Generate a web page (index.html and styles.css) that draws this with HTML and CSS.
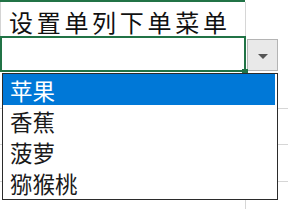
FILE: index.html
```html
<!DOCTYPE html>
<html lang="zh-CN">
<head>
    <meta charset="UTF-8">
    <title>设置单列下单菜单</title>
    <link rel="stylesheet" href="styles.css">
</head>
<body>
    <div class="sheet">
        <div class="top-edge"></div>

        <!-- title row -->
        <div class="row row-title">
            <div class="cell cell-a">设置单列下单菜单</div>
            <div class="cell cell-b"></div>
        </div>

        <!-- selected cell with dropdown button -->
        <div class="row row-select">
            <div class="cell-active"></div>
            <div class="drop-btn"><span class="arrow"></span></div>
        </div>
        <div class="fill-handle"></div>

        <div class="row row-plain"><div class="cell cell-a"></div><div class="cell cell-b"></div></div>
        <div class="row row-plain"><div class="cell cell-a"></div><div class="cell cell-b"></div></div>
        <div class="row row-plain"><div class="cell cell-a"></div><div class="cell cell-b"></div></div>
        <div class="row row-plain"><div class="cell cell-a"></div><div class="cell cell-b"></div></div>

        <!-- dropdown list -->
        <ul class="list">
            <li class="item selected">苹果</li>
            <li class="item">香蕉</li>
            <li class="item">菠萝</li>
            <li class="item">猕猴桃</li>
        </ul>
    </div>
</body>
</html>
```

FILE: styles.css
```css
body {
    margin: 0;
    background: #fff;
    font-family: "Noto Sans CJK SC", "Noto Sans", sans-serif;
}

.sheet {
    position: relative;
    width: 288px;
    height: 209px;
    overflow: hidden;
}

.top-edge {
    width: 245px;
    height: 2px;
    background: #217346;
}

.row {
    display: flex;
}

.cell {
    box-sizing: border-box;
    border-bottom: 1px solid #d6d6d6;
}

.cell-a {
    width: 246px;
    border-right: 1px solid #d6d6d6;
}

.cell-b {
    flex: 1;
}

/* title row */
.row-title .cell {
    height: 34px;
    border-bottom: none;
}

.row-title .cell-a {
    border-left: 1px solid #d4d4d4;
    padding-left: 8px;
    font-size: 24px;
    line-height: 39px;
    letter-spacing: 3.7px;
    color: #111;
    white-space: nowrap;
}

/* selected row */
.row-select {
    height: 36px;
}

.cell-active {
    box-sizing: border-box;
    width: 246px;
    height: 36px;
    border: 2px solid #217346;
}

.drop-btn {
    box-sizing: border-box;
    width: 31px;
    height: 32px;
    margin: 3px 0 0 1px;
    background: #e9e9e9;
    border: 1px solid #b4b4b4;
    display: flex;
    align-items: center;
    justify-content: center;
}

.arrow {
    width: 0;
    height: 0;
    border-left: 5px solid transparent;
    border-right: 5px solid transparent;
    border-top: 5px solid #555;
    margin-top: 2px;
}

.fill-handle {
    position: absolute;
    left: 242px;
    top: 69px;
    width: 6px;
    height: 5px;
    background: #217346;
}

.row-plain .cell {
    height: 36.5px;
}

/* dropdown list */
.list {
    position: absolute;
    left: 2px;
    top: 73px;
    width: 276px;
    box-sizing: border-box;
    margin: 0;
    padding: 0 2px 1px 0;
    list-style: none;
    background: #fff;
    border: 1.5px solid #2b2b2b;
}

.item {
    height: 31px;
    padding-left: 7px;
    font-size: 22.5px;
    line-height: 33px;
    color: #1a1a1a;
    white-space: nowrap;
}

.item.selected {
    background: #0078d7;
    color: #fff;
}
```
